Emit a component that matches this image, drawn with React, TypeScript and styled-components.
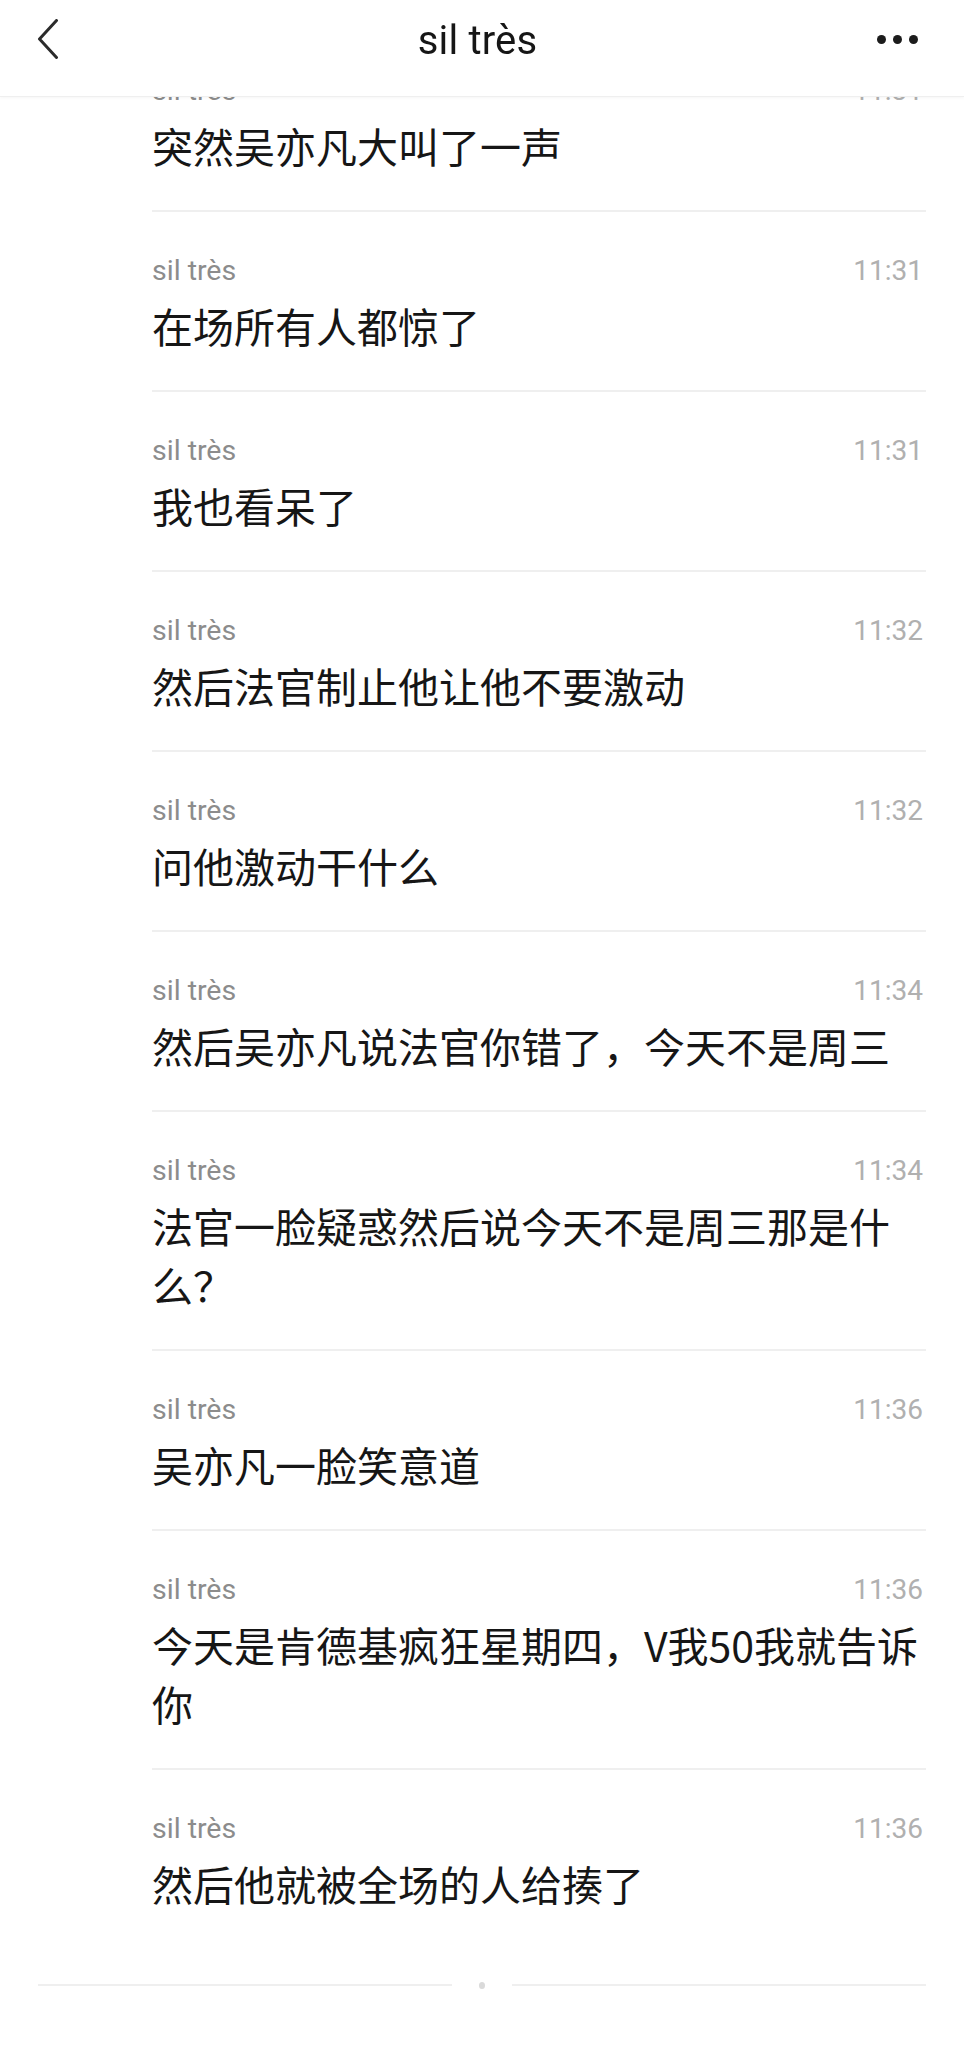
import React from "react";
import styled, { createGlobalStyle } from "styled-components";

const GlobalStyle = createGlobalStyle`
  html, body {
    margin: 0;
    padding: 0;
    background: #ffffff;
  }
  body {
    font-family: Roboto, "Noto Sans CJK SC", sans-serif;
    -webkit-font-smoothing: antialiased;
  }
`;

type Msg = { time: string; text: string };

const messages: Msg[] = [
  { time: "11:31", text: "突然吴亦凡大叫了一声" },
  { time: "11:31", text: "在场所有人都惊了" },
  { time: "11:31", text: "我也看呆了" },
  { time: "11:32", text: "然后法官制止他让他不要激动" },
  { time: "11:32", text: "问他激动干什么" },
  { time: "11:34", text: "然后吴亦凡说法官你错了，今天不是周三" },
  { time: "11:34", text: "法官一脸疑惑然后说今天不是周三那是什么？" },
  { time: "11:36", text: "吴亦凡一脸笑意道" },
  { time: "11:36", text: "今天是肯德基疯狂星期四，V我50我就告诉你" },
  { time: "11:36", text: "然后他就被全场的人给揍了" },
];

const Page = styled.div`
  width: 964px;
  min-height: 2048px;
  background: #ffffff;
`;

const Header = styled.header`
  position: fixed;
  top: 0;
  left: 0;
  right: 0;
  z-index: 10;
  height: 97px;
  box-sizing: border-box;
  padding: 0 46px 18px 37px;
  display: grid;
  grid-template-columns: 1fr auto 1fr;
  align-items: center;
  background: #ffffff;
  border-bottom: 1px solid #efefef;
  box-shadow: 0 1px 3px rgba(0, 0, 0, 0.04);
`;

const BackButton = styled.button`
  justify-self: start;
  display: flex;
  align-items: center;
  padding: 0;
  border: 0;
  background: none;
  color: #2b2b2b;
`;

const Title = styled.h1`
  margin: 3px 0 0;
  font-family: Roboto, sans-serif;
  font-size: 40px;
  font-weight: 400;
  letter-spacing: 0.2px;
  color: #161616;
  line-height: 44px;
`;

const MoreButton = styled.button`
  justify-self: end;
  display: flex;
  gap: 7px;
  padding: 0;
  border: 0;
  background: none;
`;

const Dot = styled.span`
  width: 9px;
  height: 9px;
  border-radius: 50%;
  background: #1c1c1c;
`;

const List = styled.main`
  padding: 30px 38px 0 152px;
`;

const Item = styled.section`
  border-top: 2px solid #efefef;
  padding: 43px 0 35px;
`;

const Meta = styled.div`
  display: flex;
  justify-content: space-between;
  align-items: baseline;
  height: 32px;
  line-height: 32px;
  font-family: Roboto, sans-serif;
  margin-bottom: 9px;
`;

const Name = styled.span`
  font-size: 28.5px;
  color: #8c8c8c;
`;

const Time = styled.span`
  font-size: 28px;
  color: #b0b0b0;
  padding-right: 3px;
`;

const Text = styled.p`
  margin: 0;
  font-family: "Noto Sans CJK SC", sans-serif;
  font-size: 41px;
  line-height: 59px;
  color: #161616;
  word-break: break-all;
`;

const Footer = styled.footer`
  display: flex;
  align-items: center;
  gap: 27px;
  padding: 0 38px;
  margin-top: 36px;
  height: 2px;
`;

const FooterLine = styled.span`
  flex: 1;
  height: 2px;
  background: #efefef;
`;

const FooterDot = styled.span`
  width: 6px;
  height: 7px;
  border-radius: 50%;
  background: #dadada;
`;

export default function App() {
  return (
    <Page>
      <GlobalStyle />
      <Header>
        <BackButton aria-label="back">
          <svg width="22" height="40" viewBox="0 0 22 40" fill="none">
            <path
              d="M19.5 1.5 L2.5 20 L19.5 38.5"
              stroke="currentColor"
              strokeWidth="3"
              strokeLinecap="round"
              strokeLinejoin="round"
            />
          </svg>
        </BackButton>
        <Title>sil très</Title>
        <MoreButton aria-label="more">
          <Dot />
          <Dot />
          <Dot />
        </MoreButton>
      </Header>
      <List>
        {messages.map((m, i) => (
          <Item key={i}>
            <Meta>
              <Name>sil très</Name>
              <Time>{m.time}</Time>
            </Meta>
            <Text>{m.text}</Text>
          </Item>
        ))}
      </List>
      <Footer>
        <FooterLine />
        <FooterDot />
        <FooterLine />
      </Footer>
    </Page>
  );
}
